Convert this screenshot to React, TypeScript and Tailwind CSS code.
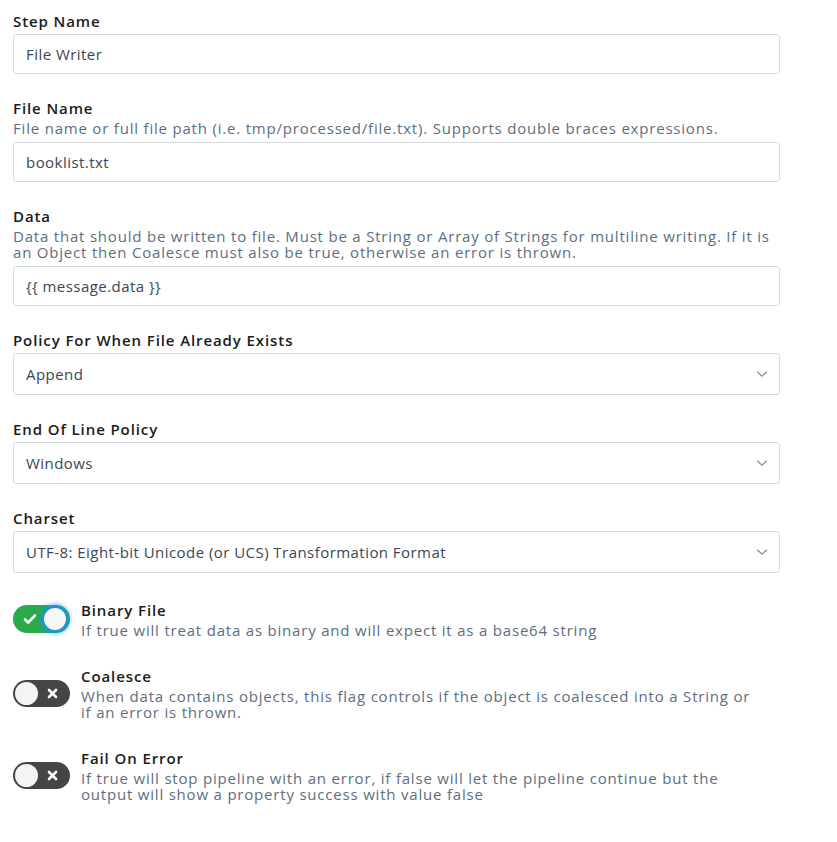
import React from 'react';

interface FieldProps {
  label: string;
  description?: React.ReactNode;
  children: React.ReactNode;
}

function Field({ label, description, children }: FieldProps) {
  return (
    <div className="mb-[24px]">
      <div className="text-[15px] leading-[20px] font-semibold tracking-[0.9px] text-[#1b1b1b]">{label}</div>
      {description && (
        <div className="mt-[2px] text-[15px] leading-[16px] tracking-[0.8px] text-[#5d6e82] whitespace-nowrap">{description}</div>
      )}
      <div className={description ? 'mt-[6px]' : 'mt-[3px]'}>{children}</div>
    </div>
  );
}

function TextInput({ value }: { value: string }) {
  return (
    <div className="h-[40px] w-full rounded-[3px] border border-[#d8dbde] bg-white px-[12px] flex items-center text-[15px] tracking-[0.45px] text-[#3b4654]">
      {value}
    </div>
  );
}

function SelectInput({ value }: { value: string }) {
  return (
    <div className="h-[42px] w-full rounded-[3px] border border-[#d8dbde] bg-white pl-[12px] pr-[10px] flex items-center justify-between text-[15px] tracking-[0.45px] text-[#3b4654]">
      <span>{value}</span>
      <svg width="14" height="14" viewBox="0 0 16 16" fill="none" stroke="#8a8f96" strokeWidth="1.5">
        <path d="M2.5 5.5l5.5 5 5.5-5" />
      </svg>
    </div>
  );
}

function Toggle({ on }: { on: boolean }) {
  if (on) {
    return (
      <div className="relative h-[28px] w-[57px] shrink-0 rounded-full bg-[#2bab47]">
        <svg className="absolute left-[10px] top-[8px]" width="14" height="12" viewBox="0 0 14 12" fill="none" stroke="white" strokeWidth="2.6" strokeLinecap="round" strokeLinejoin="round">
          <path d="M2 6.5l3.2 3L12 2.5" />
        </svg>
        <div className="absolute right-[2px] top-[1px] h-[26px] w-[26px] rounded-full bg-[#f7f7f7] border-[2px] border-[#1d8fe6] shadow-[0_0_4px_2px_rgba(30,144,255,0.6)]" />
      </div>
    );
  }
  return (
    <div className="relative h-[27px] w-[57px] shrink-0 rounded-full bg-[#454545]">
      <div className="absolute left-[2px] top-[2px] h-[23px] w-[23px] rounded-full bg-[#f4f4f4]" />
      <svg className="absolute left-[34px] top-[8px]" width="11" height="11" viewBox="0 0 11 11" fill="none" stroke="white" strokeWidth="2.6" strokeLinecap="round">
        <path d="M2 2l7 7M9 2l-7 7" />
      </svg>
    </div>
  );
}

function ToggleRow({ on, label, description }: { on: boolean; label: string; description: React.ReactNode }) {
  return (
    <div className="flex items-center gap-[11px] mb-[28px]">
      <Toggle on={on} />
      <div>
        <div className="text-[15px] leading-[20px] font-semibold tracking-[0.9px] text-[#1b1b1b]">{label}</div>
        <div className="mt-[2px] text-[15px] leading-[16px] tracking-[0.8px] text-[#5d6e82] whitespace-nowrap">{description}</div>
      </div>
    </div>
  );
}

export default function App() {
  return (
    <div className="min-h-screen bg-white" style={{ fontFamily: '"Open Sans", sans-serif' }}>
      <div className="w-[767px] ml-[13px] pt-[11px]">
        <Field label="Step Name">
          <TextInput value="File Writer" />
        </Field>
        <Field label="File Name" description="File name or full file path (i.e. tmp/processed/file.txt). Supports double braces expressions.">
          <TextInput value="booklist.txt" />
        </Field>
        <Field
          label="Data"
          description={
            <>
              Data that should be written to file. Must be a String or Array of Strings for multiline writing. If it is
              <br />
              an Object then Coalesce must also be true, otherwise an error is thrown.
            </>
          }
        >
          <TextInput value="{{ message.data }}" />
        </Field>
        <Field label="Policy For When File Already Exists">
          <SelectInput value="Append" />
        </Field>
        <Field label="End Of Line Policy">
          <SelectInput value="Windows" />
        </Field>
        <Field label="Charset">
          <SelectInput value="UTF-8: Eight-bit Unicode (or UCS) Transformation Format" />
        </Field>
        <div className="pt-[3px]">
          <ToggleRow on label="Binary File" description="If true will treat data as binary and will expect it as a base64 string" />
          <ToggleRow
            on={false}
            label="Coalesce"
            description={
              <>
                When data contains objects, this flag controls if the object is coalesced into a String or
                <br />
                if an error is thrown.
              </>
            }
          />
          <ToggleRow
            on={false}
            label="Fail On Error"
            description={
              <>
                If true will stop pipeline with an error, if false will let the pipeline continue but the
                <br />
                output will show a property success with value false
              </>
            }
          />
        </div>
      </div>
    </div>
  );
}
